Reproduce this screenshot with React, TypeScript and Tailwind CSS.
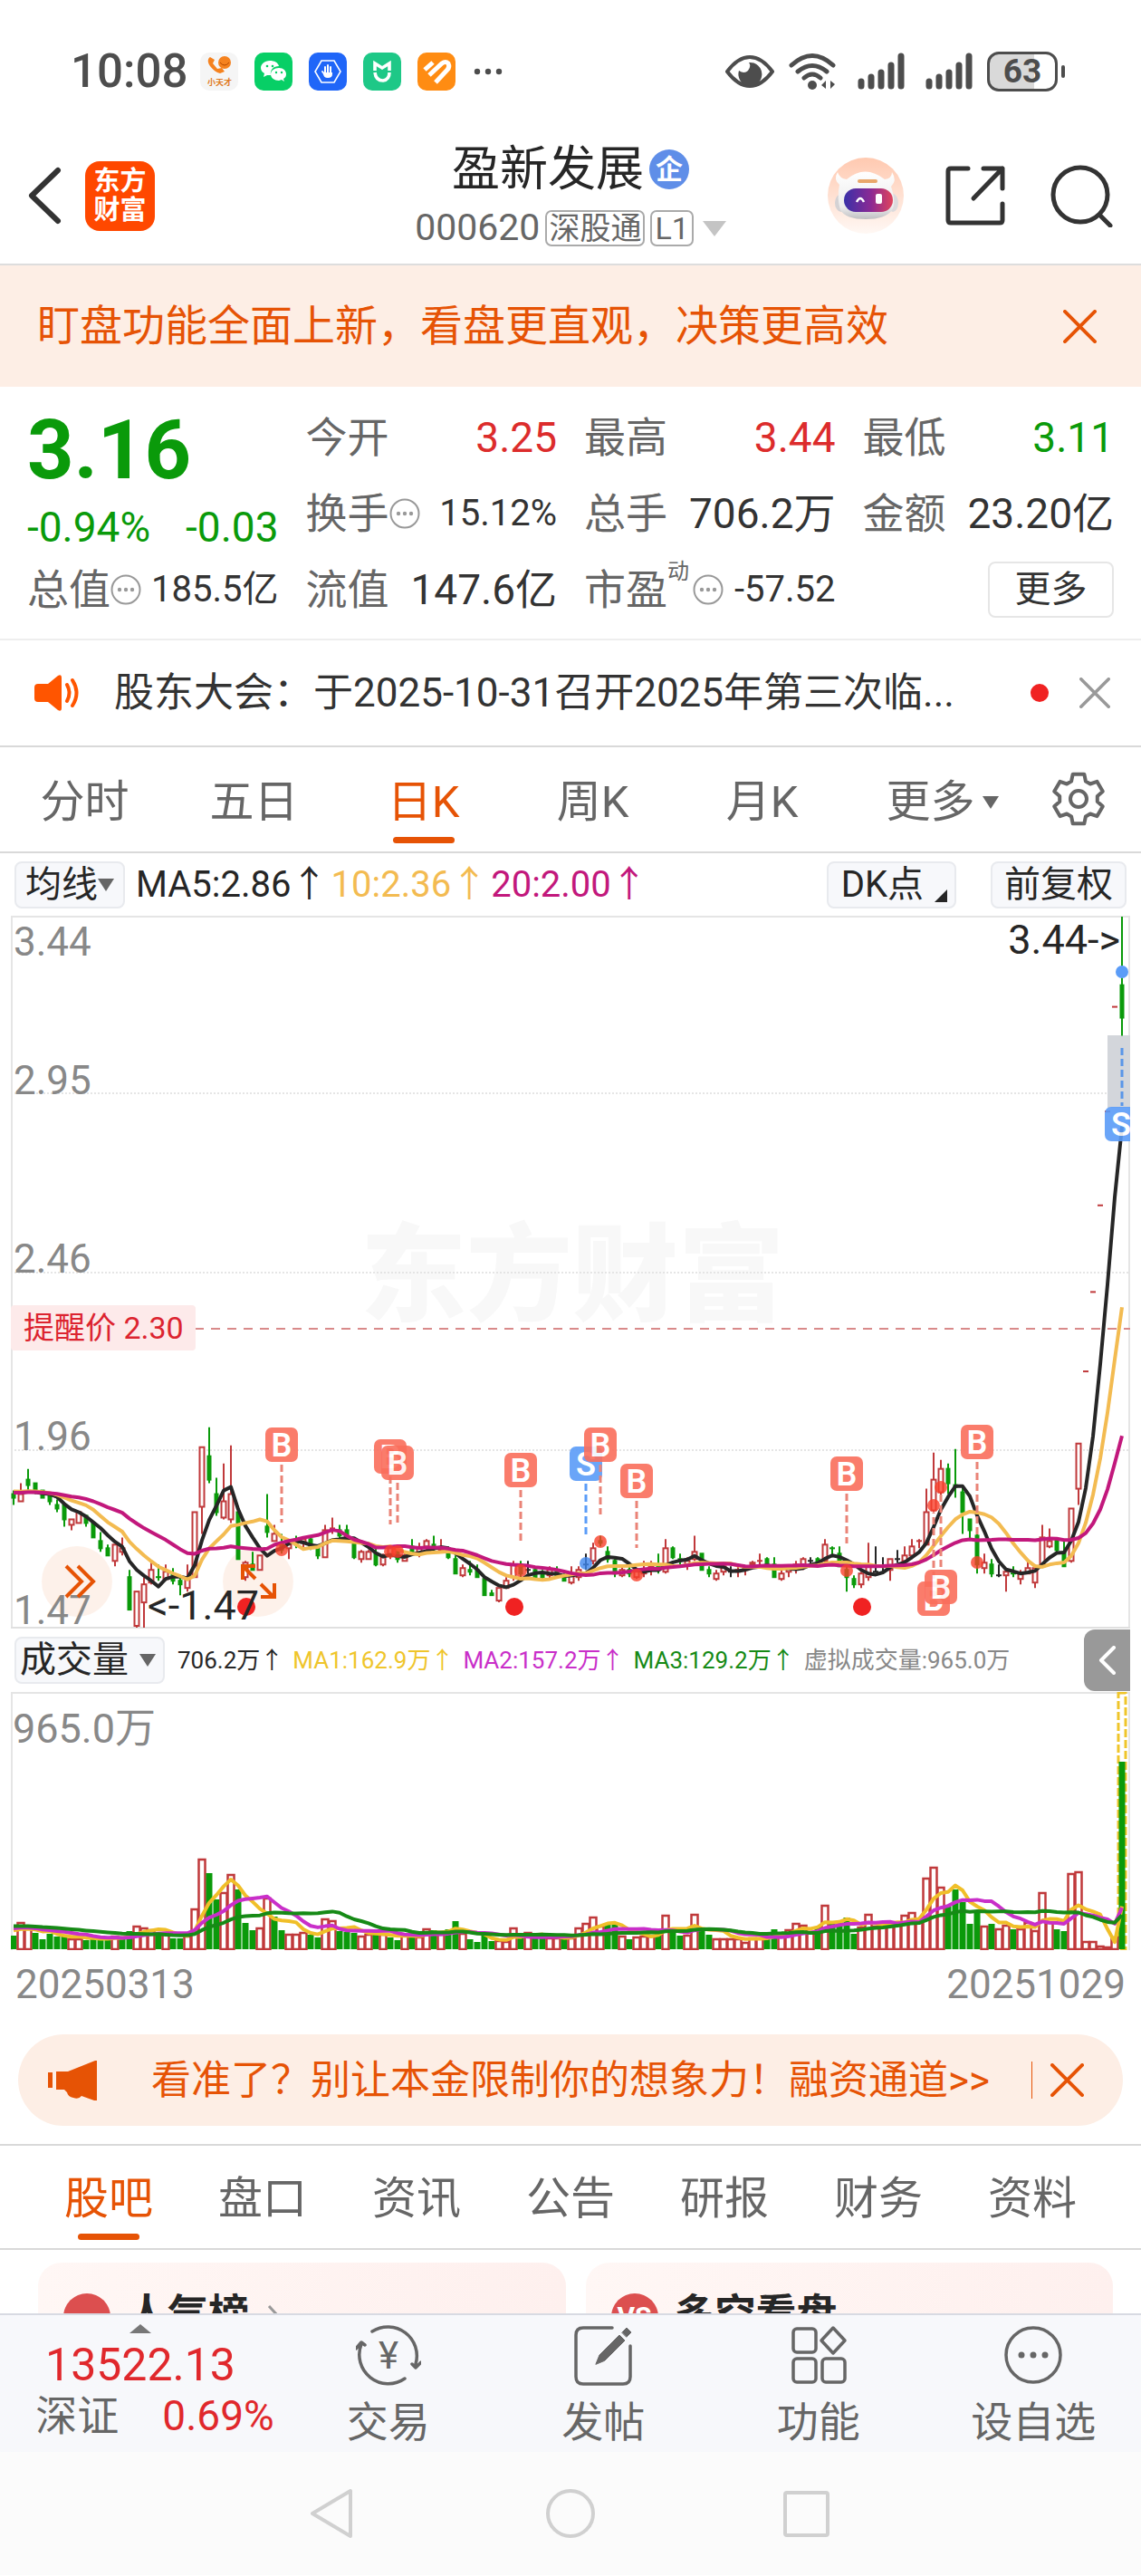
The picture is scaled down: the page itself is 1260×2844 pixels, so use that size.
import type { ReactNode } from "react";

type Color = "R" | "G" | "K";
type Candle = [Color, number, number, number, number];

const RED = "#c0393b";
const GREEN = "#0a9a0a";
const INK = "#262626";
const COLORS: Record<Color, string> = { R: RED, G: GREEN, K: INK };

// colour, high, body top, body bottom, low (cents above 1.47)
const candles: Candle[] = [
  ["G", 38, 37, 36, 34], ["R", 40, 37, 35, 35], ["G", 44, 41, 39.5, 38], ["G", 40, 40, 37.5, 37],
  ["G", 38, 38, 36, 36], ["G", 37, 37, 35, 34], ["G", 35.5, 34, 33, 32], ["G", 34, 34, 30, 28],
  ["R", 30, 30, 28.5, 27], ["R", 32, 32, 29, 29], ["G", 31, 31, 29, 28], ["G", 29, 29, 25, 25],
  ["G", 26.5, 24, 22, 21], ["G", 23, 22, 20, 20], ["R", 23, 23, 18.5, 17], ["R", 25, 22, 21, 20],
  ["G", 16, 14, 5, 5], ["R", 10, 10, 0.5, 0], ["R", 14, 12, 7, 0], ["R", 18.5, 16, 12.5, 12],
  ["G", 17.5, 14, 14, 13], ["R", 17.5, 15.5, 13.5, 13], ["G", 16.5, 15, 13, 12], ["G", 14, 13, 12, 9],
  ["R", 17.5, 14, 11, 10], ["R", 32, 32, 14, 14], ["R", 50, 50, 33.5, 26], ["G", 55.5, 47.5, 41, 40],
  ["G", 41.5, 37, 32, 31], ["R", 45.5, 35, 30.5, 30], ["R", 50.5, 37, 30, 29], ["G", 33.5, 32, 19, 19],
  ["R", 18.5, 18, 14, 13], ["G", 21, 17.5, 16, 16], ["R", 20, 20, 16, 16], ["G", 37, 28, 26.5, 25],
  ["R", 28.5, 26, 24, 24], ["G", 26, 23.5, 21.5, 20.5], ["R", 23.5, 23, 22, 19], ["G", 25.5, 24, 23, 22],
  ["R", 25, 24.5, 23.5, 22], ["G", 25.5, 24.5, 22.5, 21.5], ["G", 22.5, 22, 20, 19], ["R", 28.5, 27, 19.5, 19.5],
  ["R", 30.5, 27.5, 27.5, 26], ["G", 28.5, 27, 25.5, 24.5], ["G", 28.5, 27, 24.5, 24], ["G", 24.5, 24, 19.5, 19],
  ["R", 21.5, 21, 19, 18], ["R", 21.5, 21, 19, 19], ["G", 22.5, 20.5, 17.5, 17], ["R", 20.5, 19.5, 17.5, 17],
  ["R", 22.5, 22, 20, 19], ["G", 22, 21, 19, 18], ["R", 20.5, 20, 18.5, 18.5], ["G", 24.5, 22.5, 21, 20.5],
  ["R", 23.5, 22, 20.5, 19.5], ["R", 24.5, 24, 22.5, 21.5], ["G", 25.5, 23, 22.5, 21], ["R", 24.5, 22, 21.5, 21],
  ["G", 22.5, 22, 19.5, 19], ["G", 20, 19, 15, 15], ["R", 17.5, 16.5, 14.5, 14], ["G", 18.5, 16, 15.5, 14.5],
  ["G", 17.5, 16, 14, 14], ["G", 14, 13.5, 9, 9], ["G", 10.5, 9.5, 9, 9], ["R", 11, 11, 7.5, 7],
  ["R", 14, 13, 11, 11], ["R", 18.5, 17.5, 14, 13], ["G", 18.5, 17.5, 15, 13], ["K", 18.5, 16, 16, 15],
  ["G", 17, 16, 14, 13.5], ["G", 16, 15, 14, 13], ["R", 17, 16, 14.5, 13.5], ["G", 17, 16, 14.5, 14],
  ["G", 15, 14, 13, 13], ["R", 17, 14.5, 12.5, 12], ["R", 17, 16, 14, 13], ["K", 20.5, 17.5, 17.5, 16],
  ["R", 23.5, 22, 18.5, 17.5], ["G", 25.5, 24, 23.5, 22.5], ["G", 22.5, 21, 19, 18], ["G", 19, 18.5, 15, 14],
  ["R", 17, 16, 14.5, 14], ["G", 17, 16, 15, 14], ["R", 16, 15.5, 14, 13.5], ["R", 18.5, 16, 15, 14],
  ["R", 18.5, 17, 16, 14.5], ["G", 20.5, 17.5, 16, 15], ["R", 24.5, 22, 15.5, 15], ["G", 22.5, 22, 19.5, 19],
  ["G", 20.5, 19, 18.5, 17.5], ["R", 19.5, 18.5, 17.5, 16], ["R", 25.5, 21, 19, 18.5], ["G", 20.5, 20.5, 16, 16],
  ["G", 17, 16, 15, 14], ["R", 16, 15, 13.5, 13], ["R", 17.5, 17, 15.5, 14.5], ["K", 17, 15.5, 15.5, 14],
  ["R", 17, 16, 15.5, 14], ["R", 17, 16.5, 16, 14.5], ["R", 18.5, 18, 17.5, 16.5], ["R", 20.5, 18.5, 18.5, 17.5],
  ["G", 19.5, 19, 17.5, 17], ["G", 19.5, 17.5, 14, 14], ["R", 16, 15, 13.5, 13], ["R", 17.5, 17, 15.5, 14],
  ["R", 18.5, 17.5, 16.5, 15], ["R", 19.5, 19, 17, 16], ["K", 19.5, 18.5, 18.5, 17.5], ["G", 19.5, 19, 17.5, 17],
  ["R", 24.5, 23, 18.5, 18], ["G", 22.5, 22, 22, 19.5], ["G", 22.5, 20.5, 17, 17], ["G", 17.5, 16, 14, 10],
  ["G", 14.5, 13.5, 12, 11], ["R", 15.5, 15, 12, 11], ["R", 23.5, 17, 14, 13], ["K", 22.5, 15.5, 15.5, 15.5],
  ["K", 19.5, 17, 17, 15.5], ["R", 19, 19, 16, 13], ["K", 21.5, 19, 19, 18], ["R", 22.5, 20, 18.5, 18],
  ["R", 24.5, 22.5, 20, 19], ["R", 24.5, 24, 24, 22], ["R", 38.5, 32, 23, 23], ["R", 48.5, 41, 32.5, 32],
  ["R", 46.5, 44, 37.5, 36], ["G", 45.5, 44, 40, 37], ["G", 49.5, 39.5, 39, 36], ["G", 39, 37.5, 32, 26],
  ["G", 30, 30, 27, 24.5], ["G", 26.5, 25.5, 17.5, 15], ["R", 20.5, 18, 16.5, 15], ["G", 19, 17.5, 15, 14],
  ["K", 17.5, 14.5, 14.5, 14], ["R", 16, 15.5, 14.5, 10], ["G", 17, 15, 15, 14], ["R", 16, 15, 13.5, 12],
  ["R", 18.5, 16.5, 15, 15], ["R", 17.5, 16.5, 12.5, 11], ["R", 28.5, 25, 17, 17], ["R", 27.5, 24, 22.5, 22],
  ["G", 24.5, 24.5, 21.5, 20.5], ["G", 24.5, 21, 17, 17], ["R", 33, 33, 18.5, 18], ["R", 51, 51, 38.5, 34],
  ["R", 71, 71, 71, 71], ["R", 93, 93, 93, 93], ["R", 117, 117, 117, 117], ["R", 143, 143, 143, 143],
  ["R", 172, 172, 172, 172], ["G", 197, 178, 169, 164],
];

const volumeColors =
  "GRRGGGGGRRGGGGRGGRRRGRGGRRRGGRRGGGRRGGRRRGGRRGGGRRGRGGRGRRGRGGRG" +
  "GGGRRRGRGGRRGRRRRRGGRGRRRGRGGRRGGRRRRRRRGGRRRRRGRGGGGRRRRRRRRRRRR" +
  "GGGGGRGRRGRRRRRGGRRRRRRRG";

const volumes = [
  15, 30, 24, 18, 11, 17, 14, 15, 12, 12, 10, 12, 12, 12, 15, 11, 20, 26, 24, 22, 18, 17, 12, 12, 15, 45, 100, 84, 55,
  63, 83, 66, 29, 21, 24, 57, 36, 21, 17, 17, 19, 16, 13, 34, 32, 20, 19, 18, 15, 17, 17, 17, 13, 10, 17, 17, 14, 23,
  21, 17, 22, 31, 18, 11, 8, 15, 9, 10, 9, 24, 15, 19, 12, 12, 13, 13, 13, 13, 24, 29, 36, 26, 27, 28, 15, 11, 14, 15,
  15, 23, 38, 22, 15, 16, 39, 22, 16, 12, 12, 12, 12, 8, 13, 13, 14, 22, 15, 22, 29, 27, 20, 24, 49, 28, 30, 35, 17,
  25, 39, 26, 26, 28, 30, 38, 41, 30, 79, 91, 69, 47, 66, 52, 28, 43, 26, 28, 23, 27, 22, 23, 30, 21, 63, 30, 22, 20,
  84, 86, 9, 9, 4, 3, 14, 207,
];

const candleX = (i: number) => 3 + i * 8;
const priceY = (t: number) => 786 - t * 3.985;

const average = (values: number[], size: number, before: number) =>
  values.map((_, i) => {
    let sum = 0;
    for (let k = i - size + 1; k <= i; k++) sum += k < 0 ? before : values[k];
    return sum / size;
  });

const line = (values: number[], y: (v: number) => number) =>
  values.map((v, i) => `${i ? "L" : "M"}${candleX(i)} ${y(v).toFixed(1)}`).join("");

const closes = candles.map(([color, , top, bottom]) => (color === "G" ? bottom : top));

// candle index, badge centre, dot centre
const markers: [string, number, number, number][] = [
  ["B", 37, 584, 700],
  ["B", 52, 597, 702],
  ["B", 53, 604, 702],
  ["B", 70, 612, 723],
  ["S", 79, 605, 715],
  ["B", 81, 584, 691],
  ["B", 86, 624, 728],
  ["B", 115, 616, 723],
  ["B", 127, 754, 651],
  ["B", 128, 741, 631],
  ["B", 133, 581, 714],
];

const Close = ({ className }: { className: string }) => (
  <svg viewBox="0 0 38 38" className={className} fill="none" stroke="currentColor" strokeWidth="4" strokeLinecap="round">
    <path d="M2 2l34 34M36 2L2 36" />
  </svg>
);

const Signal = () => (
  <svg viewBox="0 0 52 42" className="h-[42px] w-[52px]" stroke="#4d4d4d" strokeWidth="7" strokeLinecap="round">
    <path d="M4 32v5M15 27v10M26 22v15M37 14v23M48 4v33" />
  </svg>
);

const StatusBar = () => (
  <div className="flex h-[157px] items-center justify-between pr-[84px] pl-[78px] text-[#4d4d4d]">
    <div className="flex items-center gap-[18px]">
      <span className="text-[51px] leading-none font-medium">10:08</span>
      <svg viewBox="0 0 42 42" className="-ml-1 size-[42px]">
        <rect width="42" height="42" rx="10" fill="#f5f5f5" />
        <path d="M11 5c-3 2-3 6 0 10s7 7 11 8l5-2-3-4-5 1-5-6 2-4z" fill="#f5821f" />
        <circle cx="27" cy="11" r="7" fill="#f5821f" />
        <path d="M22 11q5 6 10 0" stroke="#b54a00" fill="none" />
        <text x="8" y="36" fontSize="9" fontWeight="700" fill="#e07a22">小天才</text>
      </svg>
      <svg viewBox="0 0 42 42" className="size-[42px]">
        <rect width="42" height="42" rx="10" fill="#07cf66" />
        <path d="M17 9c-6 0-10 4-10 8 0 3 2 5 4 6l-1 4 4-2h4c-1-6 3-10 9-10-1-4-5-6-10-6z" fill="#fff" />
        <path d="M27 17c-5 0-9 3-9 7s4 7 9 7l3-1 3 2-1-3c2-1 3-3 3-5 0-4-3-7-8-7z" fill="#fff" />
        <g fill="#07cf66"><circle cx="14" cy="15" r="1.3" /><circle cx="20" cy="15" r="1.3" /><circle cx="24" cy="22" r="1.2" /><circle cx="30" cy="22" r="1.2" /></g>
      </svg>
      <svg viewBox="0 0 42 42" className="size-[42px]" strokeLinecap="round">
        <rect width="42" height="42" rx="10" fill="#2066f8" />
        <path d="M14 9h14l7 12-7 12H14L7 21z" fill="none" stroke="#fff" strokeWidth="1.6" />
        <path d="M18 23v-7M21 22v-8M24 23v-7M15 21l3 4" stroke="#fff" strokeWidth="2" />
        <path d="M16 22h10v2q0 4-5 4t-5-5z" fill="#fff" />
      </svg>
      <svg viewBox="0 0 42 42" className="size-[42px]" fill="none" stroke="#fff" strokeWidth="3.6">
        <rect width="42" height="42" rx="10" fill="#1ec887" stroke="none" />
        <path d="M13 20v-8l8 5 8-5v8M13 22q1 9 9 9 7-1 7-9" />
      </svg>
      <svg viewBox="0 0 42 42" className="size-[42px]" fill="none" stroke="#fff" strokeWidth="5">
        <rect width="42" height="42" rx="10" fill="#ff8c12" stroke="none" />
        <path d="M8 19l9-8M13 25l14-13q4-3 7 0 2 4-1 7L20 33" />
      </svg>
      <svg viewBox="0 0 36 8" className="h-2 w-9" fill="#4d4d4d">
        <circle cx="6" cy="4" r="3.2" /><circle cx="18" cy="4" r="3.2" /><circle cx="30" cy="4" r="3.2" />
      </svg>
    </div>
    <div className="flex items-center">
      <svg viewBox="0 0 54 36" className="h-9 w-[54px]">
        <path d="M2 18Q14 2 27 2t25 16Q40 34 27 34T2 18z" fill="none" stroke="#4d4d4d" strokeWidth="4" strokeLinejoin="round" />
        <path d="M26 8a13 13 0 1 1-11 9q6 4 10 0 4-5 1-9z" fill="#4d4d4d" />
      </svg>
      <svg viewBox="0 0 52 42" className="ml-4 h-[42px] w-[52px]" fill="none" stroke="#4d4d4d" strokeWidth="5" strokeLinecap="round">
        <path d="M3 14Q26-7 49 14M10 21q16-13 32 0M17 28q9-8 18 0" />
        <circle cx="26" cy="36" r="5" fill="#4d4d4d" stroke="none" />
        <path d="M41 31v9l-5-4zM46 40v-9l5 4z" fill="#4d4d4d" stroke="none" />
      </svg>
      <div className="ml-6 flex gap-[23px]">
        <Signal />
        <Signal />
      </div>
      <div className="ml-4 flex h-11 w-[78px] items-center justify-center rounded-[13px] border-[3px] border-[#4d4d4d] bg-linear-to-r from-[#d9d9d9] from-68% to-white to-68% text-[37px] leading-none font-bold">
        63
      </div>
      <div className="ml-1 h-[14px] w-1 rounded-full bg-[#4d4d4d]" />
    </div>
  </div>
);

const Robot = () => (
  <svg viewBox="0 0 84 84" className="size-[84px]">
    <defs>
      <linearGradient id="halo" x1="0" y1="0" x2="0" y2="1">
        <stop offset="0" stopColor="#ffc9b0" />
        <stop offset="1" stopColor="#fff8f4" />
      </linearGradient>
      <linearGradient id="visor">
        <stop offset="0" stopColor="#3930a8" />
        <stop offset=".55" stopColor="#8b2a94" />
        <stop offset="1" stopColor="#e0445c" />
      </linearGradient>
      <linearGradient id="shell" x1="0" y1="0" x2="0" y2="1">
        <stop offset="0" stopColor="#fff" />
        <stop offset=".75" stopColor="#ececec" />
        <stop offset="1" stopColor="#bfbfc2" />
      </linearGradient>
    </defs>
    <circle cx="42" cy="42" r="42" fill="url(#halo)" />
    <ellipse cx="15" cy="50" rx="7" ry="10" fill="#d4d2d4" />
    <ellipse cx="72" cy="50" rx="6" ry="10" fill="#dcdadc" />
    <path d="M13 30q-7-6-2-14 2 7 10 8 20-17 42 0 8-1 8-8 6 9-1 16 6 18 1 26Q64 68 42 68T14 58Q10 45 13 30z" fill="url(#shell)" />
    <rect x="18" y="34" width="54" height="26" rx="13" fill="url(#visor)" />
    <path d="M35 26h18" stroke="#e9a76b" strokeWidth="4" strokeLinecap="round" />
    <path d="M32 49q4-8 8 0" fill="none" stroke="#fff" strokeWidth="2.500" />
    <rect x="53" y="40" width="7" height="11" rx="2" fill="#fff" />
  </svg>
);

const Header = () => (
  <header className="grid h-[134px] grid-cols-[1fr_auto_1fr] items-center px-[30px] pb-4">
    <div className="flex items-center gap-[26px]">
      <button aria-label="返回">
        <svg viewBox="0 0 38 64" className="h-16 w-[38px]" fill="none" stroke="#333" strokeWidth="6" strokeLinecap="round" strokeLinejoin="round">
          <path d="M34 4L5 32l29 28" />
        </svg>
      </button>
      <a href="#home" className="flex size-[77px] flex-col items-center justify-center rounded-[16px] bg-[#ff4800] text-[29px] leading-8 font-bold text-white">
        <span>东方</span>
        <span>财富</span>
      </a>
    </div>
    <div className="flex flex-col items-center">
      <h1 className="flex items-center gap-[6px] text-[53px] leading-[60px] text-[#262626]">
        盈新发展
        <span className="flex size-11 items-center justify-center rounded-full bg-[#5f8ee8] text-[30px] leading-none font-bold text-white">企</span>
      </h1>
      <div className="mt-3 flex h-[46px] items-center gap-[6px] text-[#666]">
        <span className="text-[41px]">000620</span>
        <span className="rounded-[7px] border-2 border-[#aaa] px-[2px] text-[34px] leading-9">深股通</span>
        <span className="rounded-[7px] border-2 border-[#aaa] px-[3px] text-[34px] leading-9">L1</span>
        <svg viewBox="0 0 26 18" className="ml-1 h-[18px] w-[26px]" fill="#c4c4c4"><path d="M0 1h26L13 18z" /></svg>
      </div>
    </div>
    <div className="flex items-center justify-end">
      <button aria-label="智能助手"><Robot /></button>
      <button aria-label="分享" className="ml-11">
        <svg viewBox="0 0 70 70" className="size-[70px]" fill="none" stroke="#333" strokeWidth="5" strokeLinecap="round" strokeLinejoin="round">
          <path d="M27 5H8q-3 0-3 3v54q0 3 3 3h54q3 0 3-3V44M44 5h21v22M65 5L33 38" />
        </svg>
      </button>
      <button aria-label="搜索" className="ml-12">
        <svg viewBox="0 0 70 70" className="size-[70px]" fill="none" stroke="#333" strokeWidth="5" strokeLinecap="round">
          <circle cx="33" cy="34" r="30" />
          <path d="M55 57l11 11" />
        </svg>
      </button>
    </div>
  </header>
);

const Info = () => (
  <svg viewBox="0 0 34 34" className="size-[34px]" fill="#999">
    <circle cx="17" cy="17" r="15.500" fill="none" stroke="#999" strokeWidth="2" />
    <circle cx="10" cy="17" r="2.200" /><circle cx="17" cy="17" r="2.200" /><circle cx="24" cy="17" r="2.200" />
  </svg>
);

type StatProps = { label: string; value: string; info?: boolean; sup?: string; color?: string; small?: boolean };

const Stat = ({ label, value, info, sup, color = "text-[#333]", small }: StatProps) => (
  <div className="flex items-center justify-between whitespace-nowrap">
    <span className="flex items-center text-[46px] text-[#666]">
      {label}
      {sup && <sup className="top-[-20px] mr-1 text-[24px]">{sup}</sup>}
      {info && <Info />}
    </span>
    <span className={`${color} ${small ? "text-[40px]" : "text-[46px]"}`}>{value}</span>
  </div>
);

const Quote = () => (
  <section className="grid auto-rows-[84px] grid-cols-4 gap-x-[30px] border-b-2 border-[#eee] px-[30px] pt-[14px] pb-3 leading-[60px]">
    <div className="row-span-2 pt-[7px] text-[#0a9a0a]">
      <div className="text-[90px] leading-[100px] font-bold">3.16</div>
      <div className="mt-1 flex justify-between text-[46px]">
        <span>-0.94%</span>
        <span>-0.03</span>
      </div>
    </div>
    <Stat label="今开" value="3.25" color="text-[#dc2c2c]" />
    <Stat label="最高" value="3.44" color="text-[#dc2c2c]" />
    <Stat label="最低" value="3.11" color="text-[#0a9a0a]" />
    <Stat label="换手" value="15.12%" info small />
    <Stat label="总手" value="706.2万" />
    <Stat label="金额" value="23.20亿" />
    <Stat label="总值" value="185.5亿" info small />
    <Stat label="流值" value="147.6亿" />
    <Stat label="市盈" sup="动" value="-57.52" info small />
    <div className="flex items-center justify-end">
      <button className="h-[62px] w-[139px] rounded-[8px] border-2 border-[#e6e6e6] text-[40px] leading-none text-[#333]">更多</button>
    </div>
  </section>
);

const Notice = () => (
  <section className="flex h-[118px] items-center border-b-2 border-[#d9d9d9] pr-[34px] pl-[38px]">
    <svg viewBox="0 0 50 40" className="h-10 w-[50px]" fill="#ff5500">
      <path d="M4 10h11L26 1q4-2 4 2v34q0 4-4 2l-11-9H4q-4 0-4-4V14q0-4 4-4z" />
      <path d="M36 11q5 9 0 18M42 6q9 14 0 28" fill="none" stroke="#ff5500" strokeWidth="4" strokeLinecap="round" />
    </svg>
    <a href="#notice" className="ml-[38px] min-w-0 flex-1 truncate text-[44px] text-[#333]">股东大会：于2025-10-31召开2025年第三次临...</a>
    <span className="size-5 rounded-full bg-[#f02222]" />
    <button aria-label="关闭公告" className="ml-[34px] text-[#999]"><Close className="size-[34px]" /></button>
  </section>
);

const gear = (() => {
  const points: string[] = [];
  for (let k = 0; k < 6; k++) {
    const base = k * 60 - 90;
    for (const [offset, r] of [[-22, 21], [-13, 28], [13, 28], [22, 21]]) {
      const a = ((base + offset) * Math.PI) / 180;
      points.push(`${(31 + r * Math.cos(a)).toFixed(1)} ${(31 + r * Math.sin(a)).toFixed(1)}`);
    }
  }
  return `M${points.join("L")}Z`;
})();

const Tab = ({ children, active }: { children: ReactNode; active?: boolean }) => (
  <button className={`flex flex-1 flex-col items-center justify-end text-[49px] leading-[60px] ${active ? "text-[#e65305]" : "text-[#666]"}`}>
    <span className="flex items-center">{children}</span>
    <span className={`mt-2 h-[7px] w-[68px] rounded-full ${active ? "bg-[#e65305]" : ""}`} />
  </button>
);

const PeriodTabs = () => (
  <nav className="flex h-[117px] border-b-2 border-[#d9d9d9] pb-[9px]">
    <Tab>分时</Tab>
    <Tab>五日</Tab>
    <Tab active>日K</Tab>
    <Tab>周K</Tab>
    <Tab>月K</Tab>
    <Tab>
      <span className="pl-6">更多</span>
      <svg viewBox="0 0 18 14" className="ml-2 h-[14px] w-[18px]" fill="#666"><path d="M0 0h18L9 14z" /></svg>
    </Tab>
    <button aria-label="设置" className="flex w-[138px] items-center justify-center pt-2">
      <svg viewBox="0 0 62 62" className="size-[62px]" fill="none" stroke="#666" strokeWidth="4" strokeLinejoin="round">
        <path d={gear} />
        <circle cx="31" cy="31" r="9" />
      </svg>
    </button>
  </nav>
);

const Chip = ({ children, className }: { children: ReactNode; className: string }) => (
  <button className={`flex h-[52px] items-center rounded-[8px] border-2 border-[#e8eaee] bg-[#f7f8fb] text-[40px] leading-none text-[#262626] ${className}`}>
    {children}
  </button>
);

const Badge = ({ kind, x, y }: { kind: string; x: number; y: number }) => (
  <g opacity=".9">
    <rect x={x - 18} y={y - 19} width="36" height="38" rx="7" fill={kind === "B" ? "#fa6e5c" : "#5a9cf8"} />
    <text x={x} y={y + 13} fontSize="36" fontWeight="600" fill="#fff" textAnchor="middle">{kind}</text>
  </g>
);

const PriceChart = () => (
  <svg viewBox="0 0 1236 787" className="block h-auto w-full">
    <text x="620" y="438" fontSize="117" fontWeight="900" fill="#f8f8f8" textAnchor="middle">东方财富</text>
    <path d="M0 196h1236M0 394h1236M0 590h1236" stroke="#ddd" strokeWidth="1.500" strokeDasharray="2 2" />
    <path d="M1 787V1h1234v786" fill="none" stroke="#e5e5e5" strokeWidth="2" />
    <path d="M0 786h1236" stroke="#e0e0e0" strokeWidth="2" />
    <path d="M203 456h1033" stroke="#d98a8a" strokeWidth="2" strokeDasharray="10 8" />
    <rect y="430" width="204" height="50" rx="4" fill="#fdeaea" />
    <text x="14" y="467" fontSize="34" fill="#dc2430">提醒价 2.30</text>
    <rect x="1211" y="132" width="25" height="80" fill="#d3d6db" />
    <circle cx="73" cy="735" r="39" fill="#fdeee6" fillOpacity=".85" />
    <circle cx="273" cy="735" r="39" fill="#fdeee6" fillOpacity=".85" />
    <g fontSize="44" fill="#888">
      <text x="3" y="44">3.44</text>
      <text x="3" y="197">2.95</text>
      <text x="3" y="394">2.46</text>
      <text x="3" y="590">1.96</text>
      <text x="3" y="782">1.47</text>
    </g>

    {candles.map(([color, high, top, bottom, low], i) => {
      const x = candleX(i);
      const height = (top - bottom) * 3.985;
      return (
        <g key={i} stroke={COLORS[color]} fill={color === "R" ? "#fff" : COLORS[color]} strokeWidth="2">
          <path d={`M${x} ${priceY(high)}V${priceY(low)}`} />
          {height < 1 ? (
            <path d={`M${x - 3} ${priceY(top)}h6`} />
          ) : (
            <rect x={x - (color === "R" ? 2.5 : 1.5)} y={priceY(top)} width={color === "R" ? 5 : 3} height={height} />
          )}
        </g>
      );
    })}

    <g fill="none" strokeWidth="4" strokeLinejoin="round">
      <path d={line(average(closes, 5, 38), priceY)} stroke={INK} />
      <path d={line(average(closes, 10, 38), priceY)} stroke="#f3bb51" />
      <path d={line(average(closes, 20, 37.5), priceY)} stroke="#c2187c" />
    </g>

    {markers.map(([kind, index, badgeY, dotY]) => {
      const color = kind === "B" ? "#ea8377" : "#5a9cf8";
      const from = badgeY < dotY ? badgeY + 22 : badgeY - 22;
      return (
        <g key={index}>
          <path d={`M${candleX(index)} ${from}V${badgeY < dotY ? dotY - 30 : dotY + 8}`} stroke={color} strokeWidth="3" strokeDasharray="8 4" />
          <circle cx={candleX(index)} cy={dotY} r="7" fill={kind === "B" ? "#f9402b" : "#3f86ee"} fillOpacity=".8" />
          <Badge kind={kind} x={candleX(index)} y={badgeY} />
        </g>
      );
    })}
    <path d="M1227 146v64" stroke="#5a96e8" strokeWidth="3" strokeDasharray="8 4" />
    <circle cx="1227" cy="62" r="7" fill="#5a9cf8" />
    <Badge kind="S" x={1226} y={230} />

    <g fill="none" stroke="#e65305" strokeWidth="4">
      <path d="M61 718l17 17-17 17M74 718l17 17-17 17" />
      <path d="M256 733v-15h14M256 718l14 14M276 738l14 14M291 737v15h-15" />
    </g>
    <g fill="#f02222">
      <circle cx="260" cy="763" r="10" />
      <circle cx="556" cy="763" r="10" />
      <circle cx="940" cy="763" r="10" />
    </g>
    <g fill={INK} fontSize="45">
      <text x="1225" y="42" textAnchor="end">3.44-&gt;</text>
      <text x="151" y="777">&lt;-1.47</text>
    </g>
  </svg>
);

const VolumeChart = () => {
  const y = (v: number) => 284 - v;
  return (
    <svg viewBox="0 0 1236 285" className="block h-auto w-full">
      <path d="M1 285V1h1234v284" fill="none" stroke="#e5e5e5" strokeWidth="2" />
      <text x="2" y="56" fontSize="45" fill="#888">965.0万</text>
      <rect x="1223" y="1" width="8" height="283" fill="none" stroke="#efc52b" strokeWidth="3" strokeDasharray="9 3" />
      {volumes.map((v, i) =>
        volumeColors[i] === "R" ? (
          <rect key={i} x={candleX(i) - 3.5} y={y(v) + 1} width="7" height={v - 1} fill="#fff" stroke={RED} strokeWidth="2.500" />
        ) : (
          <rect key={i} x={candleX(i) - 3.5} y={y(v)} width="7" height={v} fill={GREEN} />
        ),
      )}
      <g fill="none" strokeWidth="4" strokeLinejoin="round">
        <path d={line(average(volumes, 5, 22), y)} stroke="#f0bf29" />
        <path d={line(average(volumes, 10, 24), y)} stroke="#c92fc9" />
        <path d={line(average(volumes, 20, 26), y)} stroke="#168a16" />
      </g>
    </svg>
  );
};

const Chart = () => (
  <section>
    <div className="flex h-[69px] items-center px-4 text-[40px] leading-none whitespace-nowrap">
      <Chip className="px-[10px]">
        均线<svg viewBox="0 0 18 14" className="h-[14px] w-[18px]" fill="#666"><path d="M0 0h18L9 14z" /></svg>
      </Chip>
      <span className="ml-3 text-[#262626]">MA5:2.86↑</span>
      <span className="ml-1 text-[#f3bb51]">10:2.36↑</span>
      <span className="ml-1 text-[#c2187c]">20:2.00↑</span>
      <Chip className="mr-[38px] ml-auto gap-3 pr-2 pl-[14px]">
        DK点<svg viewBox="0 0 14 14" className="mt-6 size-[14px]" fill="#262626"><path d="M14 0v14H0z" /></svg>
      </Chip>
      <Chip className="px-[13px]">前复权</Chip>
    </div>
    <div className="px-3"><PriceChart /></div>
    <div className="flex h-[70px] items-center pr-3 pl-4 text-[26px] leading-none whitespace-nowrap">
      <Chip className="gap-3 px-1">
        成交量<svg viewBox="0 0 18 14" className="mr-1 h-[14px] w-[18px]" fill="#666"><path d="M0 0h18L9 14z" /></svg>
      </Chip>
      <span className="ml-[14px] text-[#262626]">706.2万↑</span>
      <span className="ml-[10px] text-[#efc52b]">MA1:162.9万↑</span>
      <span className="ml-[10px] text-[#c92fc9]">MA2:157.2万↑</span>
      <span className="ml-[10px] text-[#168a16]">MA3:129.2万↑</span>
      <span className="ml-[10px] text-[#888]">虚拟成交量:965.0万</span>
      <button aria-label="展开" className="ml-auto flex h-[68px] w-[51px] items-center justify-center rounded-l-[12px] bg-[#999]">
        <svg viewBox="0 0 20 32" className="h-8 w-5" fill="none" stroke="#fff" strokeWidth="4" strokeLinecap="round" strokeLinejoin="round"><path d="M17 2L3 16l14 14" /></svg>
      </button>
    </div>
    <div className="px-3"><VolumeChart /></div>
    <div className="flex justify-between px-[17px] pt-2 text-[44px] leading-[60px] text-[#888]">
      <span>20250313</span>
      <span>20251029</span>
    </div>
  </section>
);

const Promo = () => (
  <div className="px-5 pt-[25px] pb-[20px]">
    <div className="flex h-[101px] items-center rounded-full bg-[#fdeee5] pr-[43px] pl-[33px] text-[#e65305]">
      <svg viewBox="0 0 54 44" className="h-11 w-[54px]" fill="#e65305">
        <path d="M0 13h5v17H0zM9 12h13L52 0h2v44h-3l-14-5q-3 4-9 2-6-1-7-6l-3-3H9z" />
      </svg>
      <a href="#margin" className="ml-[60px] text-[44px] whitespace-nowrap">看准了？别让本金限制你的想象力！融资通道&gt;&gt;</a>
      <span className="ml-auto h-[41px] w-px bg-[#e65305]" />
      <button aria-label="关闭广告" className="ml-5"><Close className="size-[37px]" /></button>
    </div>
  </div>
);

const Card = ({ icon, title, arrow }: { icon: ReactNode; title: string; arrow?: boolean }) => (
  <a href="#card" className="flex h-[160px] flex-1 items-start rounded-[26px] bg-linear-to-r from-[#fff7f5] to-[#fef0ee] pt-[30px] pl-7 text-[45px] leading-[56px] font-bold text-[#262626]">
    <span className="mt-1 mr-[18px] flex size-[52px] items-center justify-center rounded-full bg-[#dc4f4f] text-[30px] text-white">{icon}</span>
    {title}
    {arrow && (
      <svg viewBox="0 0 14 26" className="mt-4 ml-5 h-[26px] w-[14px]" fill="none" stroke="#999" strokeWidth="3"><path d="M2 2l10 11L2 24" /></svg>
    )}
  </a>
);

const NavItem = ({ label, children }: { label: string; children: ReactNode }) => (
  <button className="flex flex-1 flex-col items-center pt-[10px] text-[46px] leading-[60px] text-[#666]">
    <svg viewBox="0 0 72 68" className="h-[68px] w-[72px]" fill="none" stroke="#666" strokeWidth="3.500" strokeLinecap="round" strokeLinejoin="round">
      {children}
    </svg>
    <span className="mt-[10px]">{label}</span>
  </button>
);

const BottomNav = () => (
  <nav className="flex h-[153px] border-t-2 border-[#d8dae2] bg-[#f7f8fb]">
    <a href="#index" className="flex w-[310px] flex-col items-center pt-[10px] text-[#e0282c]">
      <svg viewBox="0 0 24 10" className="h-[10px] w-6" fill="#777"><path d="M12 0l12 10H0z" /></svg>
      <span className="mt-2 text-[50px] leading-[54px]">13522.13</span>
      <span className="flex gap-12 pl-8 text-[46px] leading-[58px]">
        <span className="text-[#666]">深证</span>
        <span>0.69%</span>
      </span>
    </a>
    <NavItem label="交易">
      <path d="M18 8A32 32 0 0 1 66 44M54 60A32 32 0 0 1 6 22M0 27l6-7 4 3M72 42l-6 6-4-4" />
      <text x="36" y="49" fontSize="42" textAnchor="middle" fill="#666" stroke="none">¥</text>
    </NavItem>
    <NavItem label="发帖">
      <path d="M46 4H14q-8 0-8 8v46q0 8 8 8h44q8 0 8-8V24" />
      <path d="M28 44l4-10 22-22 6 6-22 22zM57 9l5-5 5 5-5 5z" fill="#666" strokeWidth="1" />
    </NavItem>
    <NavItem label="功能">
      <rect x="8" y="5" width="25" height="26" rx="4" />
      <rect x="8" y="38" width="25" height="26" rx="4" />
      <rect x="40" y="38" width="25" height="26" rx="4" />
      <path d="M52 4l13 14-13 14-13-14z" />
    </NavItem>
    <NavItem label="设自选">
      <circle cx="36" cy="34" r="30" />
      <g fill="#666" stroke="none"><circle cx="23" cy="34" r="3.500" /><circle cx="36" cy="34" r="3.500" /><circle cx="49" cy="34" r="3.500" /></g>
    </NavItem>
  </nav>
);

const SystemNav = () => (
  <div className="flex h-[136px] items-center justify-center gap-[208px] bg-[#fbfbfb] pr-1">
    <button aria-label="后退">
      <svg viewBox="0 0 54 56" className="h-14 w-[54px]" fill="none" stroke="#d0d0d0" strokeWidth="4" strokeLinejoin="round"><path d="M46 3v50L4 28z" /></svg>
    </button>
    <button aria-label="主屏幕" className="size-[54px] rounded-full border-4 border-[#d0d0d0]" />
    <button aria-label="最近任务" className="size-[51px] rounded-[4px] border-4 border-[#d0d0d0]" />
  </div>
);

export default function App() {
  return (
    <div className="bg-white font-[Roboto,'Noto_Sans_CJK_SC',sans-serif]">
      <StatusBar />
      <Header />
      <div className="flex h-[136px] items-center justify-between border-t-2 border-[#ddd] bg-[#fdeee5] pr-[49px] pl-[41px] text-[47px] text-[#e65305]">
        <a href="#news">盯盘功能全面上新，看盘更直观，决策更高效</a>
        <button aria-label="关闭横幅"><Close className="size-[37px]" /></button>
      </div>
      <Quote />
      <Notice />
      <PeriodTabs />
      <Chart />
      <Promo />
      <nav className="flex h-[117px] border-y-2 border-[#d9d9d9] px-[35px] pb-[9px]">
        <Tab active>股吧</Tab>
        <Tab>盘口</Tab>
        <Tab>资讯</Tab>
        <Tab>公告</Tab>
        <Tab>研报</Tab>
        <Tab>财务</Tab>
        <Tab>资料</Tab>
      </nav>
      <div className="flex h-[70px] gap-[22px] overflow-hidden pt-[14px] pr-[31px] pl-[42px]">
        <Card icon={<span className="mt-3 h-5 w-4 bg-white" />} title="人气榜" arrow />
        <Card icon="VS" title="多空看盘" />
      </div>
      <BottomNav />
      <SystemNav />
    </div>
  );
}
